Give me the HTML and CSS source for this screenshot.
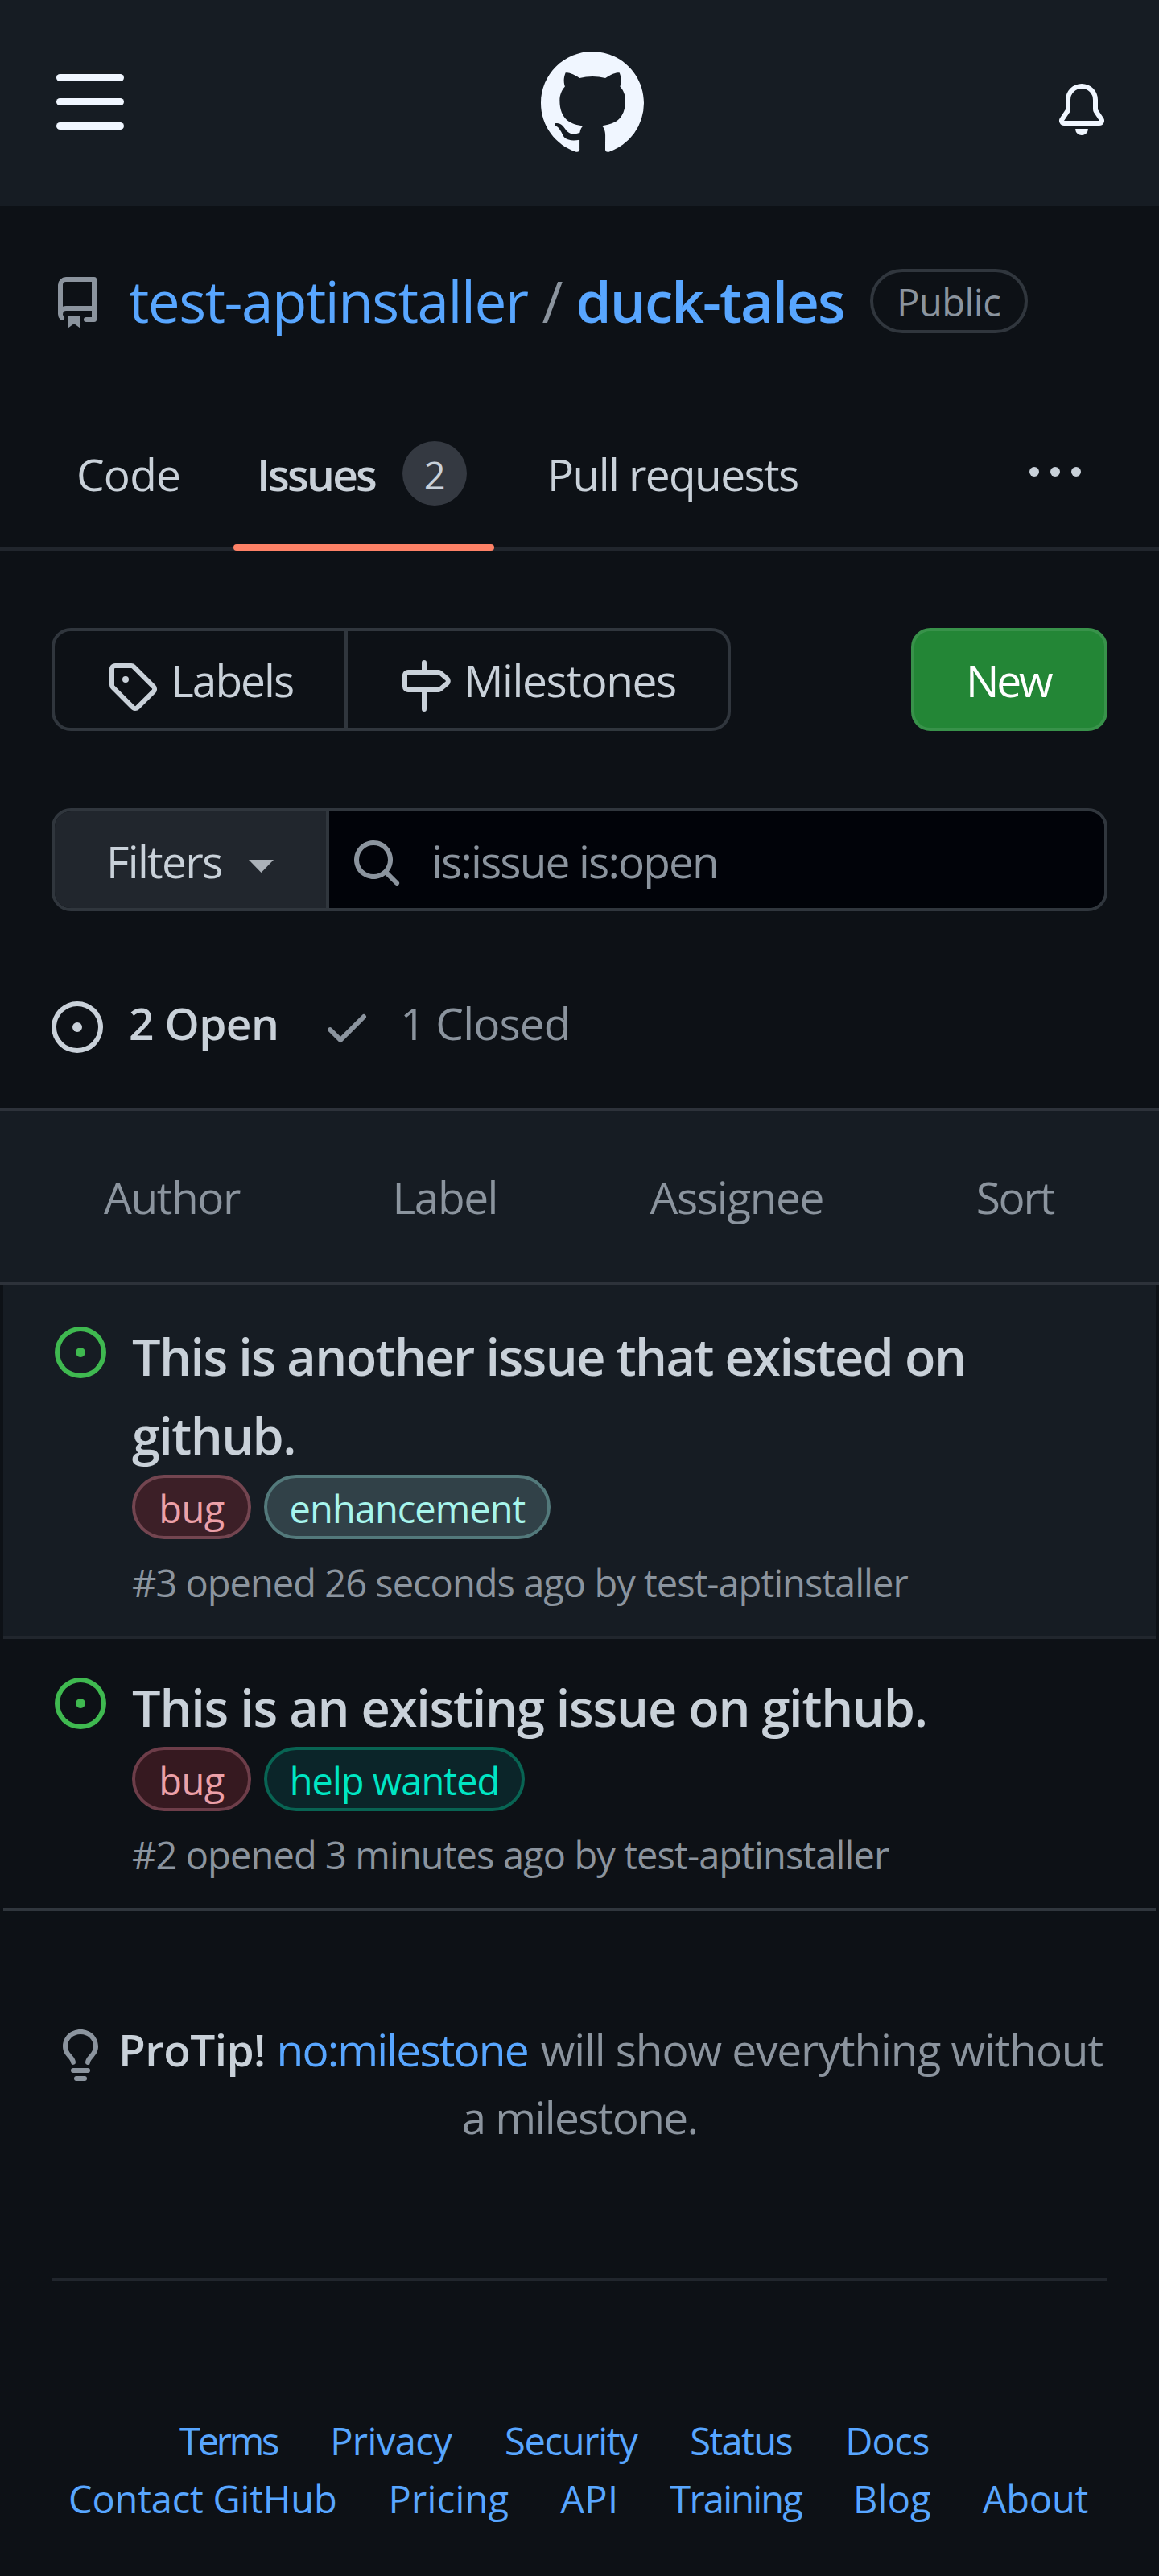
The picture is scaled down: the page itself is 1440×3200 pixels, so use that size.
FILE: index.html
```
<!DOCTYPE html>
<html lang="en">
<head>
<meta charset="utf-8">
<title>Issues · test-aptinstaller/duck-tales</title>
<link rel="stylesheet" href="styles.css">
</head>
<body>
<header class="header">
  <svg class="menu" viewBox="0 0 84 69"><rect width="84" height="9" rx="4.5"/><rect y="30" width="84" height="9" rx="4.5"/><rect y="60" width="84" height="9" rx="4.5"/></svg>
  <svg class="logo" viewBox="0 0 16 16"><path fill-rule="evenodd" d="M8 0C3.58 0 0 3.58 0 8c0 3.54 2.29 6.53 5.47 7.59.4.07.55-.17.55-.38 0-.19-.01-.82-.01-1.49-2.01.37-2.53-.49-2.69-.94-.09-.23-.48-.94-.82-1.13-.28-.15-.68-.52-.01-.53.63-.01 1.08.58 1.23.82.72 1.21 1.87.87 2.33.66.07-.52.28-.87.51-1.07-1.78-.2-3.64-.89-3.64-3.95 0-.87.31-1.59.82-2.15-.08-.2-.36-1.02.08-2.12 0 0 .67-.21 2.2.82.64-.18 1.32-.27 2-.27s1.36.09 2 .27c1.53-1.04 2.2-.82 2.2-.82.44 1.1.16 1.92.08 2.12.51.56.82 1.27.82 2.15 0 3.07-1.87 3.75-3.65 3.95.29.25.54.73.54 1.48 0 1.07-.01 1.93-.01 2.2 0 .21.15.46.55.38A8.01 8.01 0 0016 8c0-4.42-3.58-8-8-8z"/></svg>
  <svg class="icon bell" viewBox="0 0 16 16"><path d="M8 16a2 2 0 001.985-1.75c.017-.137-.097-.25-.235-.25h-3.5c-.138 0-.252.113-.235.25A2 2 0 008 16z"/><path fill-rule="evenodd" d="M8 1.5A3.5 3.5 0 004.5 5v2.947c0 .346-.102.683-.294.97l-1.703 2.556a.018.018 0 00-.003.01l.001.006c0 .002.002.004.004.006a.017.017 0 00.006.004l.007.001h10.964l.007-.001a.016.016 0 00.006-.004.016.016 0 00.004-.006l.001-.007a.017.017 0 00-.003-.01l-1.703-2.554a1.75 1.75 0 01-.294-.97V5A3.5 3.5 0 008 1.5zM3 5a5 5 0 0110 0v2.947c0 .05.015.098.042.139l1.703 2.555A1.518 1.518 0 0113.482 13H2.518a1.518 1.518 0 01-1.263-2.36l1.703-2.554A.25.25 0 003 7.947V5z"/></svg>
</header>

<div class="repo">
  <svg class="icon repo-icon" viewBox="0 0 16 16"><path fill-rule="evenodd" d="M2 2.5A2.5 2.5 0 014.5 0h8.75a.75.75 0 01.75.75v12.5a.75.75 0 01-.75.75h-2.5a.75.75 0 110-1.5h1.75v-2h-8a1 1 0 00-.714 1.7.75.75 0 01-1.072 1.05A2.495 2.495 0 012 11.5v-9zm10.5-1V9h-8c-.356 0-.694.074-1 .208V2.5a1 1 0 011-1h8zM5 12.25v3.25a.25.25 0 00.4.2l1.45-1.087a.25.25 0 01.3 0L8.6 15.7a.25.25 0 00.4-.2v-3.25a.25.25 0 00-.25-.25h-3.5a.25.25 0 00-.25.25z"/></svg>
  <a class="owner">test-aptinstaller</a>
  <span class="slash">/</span>
  <a class="name">duck-tales</a>
  <span class="visibility">Public</span>
</div>

<nav class="tabs">
  <a class="tab-code">Code</a>
  <a class="tab-issues"><span class="tab-issues-text">Issues</span><span class="counter">2</span></a>
  <a class="tab-pulls">Pull requests</a>
  <svg class="dots" viewBox="0 0 64 12"><circle cx="6" cy="6" r="6"/><circle cx="32" cy="6" r="6"/><circle cx="58" cy="6" r="6"/></svg>
</nav>

<div class="actions">
  <div class="group">
    <a class="group-item labels-link">
      <svg class="icon" viewBox="0 0 16 16"><path fill-rule="evenodd" d="M2.5 7.775V2.75a.25.25 0 01.25-.25h5.025a.25.25 0 01.177.073l6.25 6.25a.25.25 0 010 .354l-5.025 5.025a.25.25 0 01-.354 0l-6.25-6.25a.25.25 0 01-.073-.177zm-1.5 0V2.75C1 1.784 1.784 1 2.75 1h5.025c.464 0 .91.184 1.238.513l6.25 6.25a1.75 1.75 0 010 2.474l-5.026 5.026a1.75 1.75 0 01-2.474 0l-6.25-6.25A1.75 1.75 0 011 7.775zM6 5a1 1 0 100 2 1 1 0 000-2z"/></svg>
      <span class="labels-text">Labels</span>
    </a>
    <a class="group-item">
      <svg class="icon" viewBox="0 0 16 16"><path fill-rule="evenodd" d="M7.75 0a.75.75 0 01.75.75V3h3.634c.414 0 .814.147 1.13.414l2.07 1.75a1.75 1.75 0 010 2.672l-2.07 1.75a1.75 1.75 0 01-1.13.414H8.5v5.25a.75.75 0 11-1.5 0V10H2.75A1.75 1.75 0 011 8.25v-3.5C1 3.784 1.784 3 2.75 3H7V.75A.75.75 0 017.75 0zm0 8.5h4.384a.25.25 0 00.161-.06l2.07-1.75a.25.25 0 000-.38l-2.07-1.75a.25.25 0 00-.161-.06H2.75a.25.25 0 00-.25.25v3.5c0 .138.112.25.25.25h5z"/></svg>
      <span class="milestones-text">Milestones</span>
    </a>
  </div>
  <a class="new">New</a>
</div>

<div class="search">
  <div class="filters"><span class="filters-text">Filters</span><svg class="caret" viewBox="0 0 31 16"><path d="M0 0h31L15.500 16z"/></svg></div>
  <div class="query">
    <svg class="icon" viewBox="0 0 16 16"><path fill-rule="evenodd" d="M11.5 7a4.499 4.499 0 11-8.998 0A4.499 4.499 0 0111.5 7zm-.82 4.74a6 6 0 111.06-1.06l3.04 3.04a.75.75 0 11-1.06 1.06l-3.04-3.04z"/></svg>
    <span class="query-text">is:issue is:open</span>
  </div>
</div>

<div class="states">
  <svg class="icon" viewBox="0 0 16 16"><path d="M8 9.500a1.500 1.500 0 100-3 1.500 1.500 0 000 3z"/><path fill-rule="evenodd" d="M8 0a8 8 0 100 16A8 8 0 008 0zM1.500 8a6.500 6.500 0 1113 0 6.500 6.500 0 01-13 0z"/></svg>
  <span class="open">2 Open</span>
  <svg class="icon check" viewBox="0 0 16 16"><path d="M13.780 4.220a.75.75 0 010 1.060l-7.250 7.250a.75.75 0 01-1.060 0L2.220 9.280a.75.75 0 011.060-1.060L6 10.940l6.720-6.720a.75.75 0 011.060 0z"/></svg>
  <span class="closed">1 Closed</span>
</div>

<div class="sortbar">
  <span class="by-author">Author</span><span class="by-label">Label</span><span class="by-assignee">Assignee</span><span class="by-sort">Sort</span>
</div>

<main>
  <article class="issue issue-active">
    <svg class="icon" viewBox="0 0 16 16"><path d="M8 9.500a1.500 1.500 0 100-3 1.500 1.500 0 000 3z"/><path fill-rule="evenodd" d="M8 0a8 8 0 100 16A8 8 0 008 0zM1.500 8a6.500 6.500 0 1113 0 6.500 6.500 0 01-13 0z"/></svg>
    <div class="issue-body">
      <h2 class="title title-wrap">This is another issue that existed on<br>github.</h2>
      <div class="labels"><span class="label bug">bug</span><span class="label enhancement">enhancement</span></div>
      <p class="meta">#3 opened 26 seconds ago by test-aptinstaller</p>
    </div>
  </article>
  <article class="issue issue-last">
    <svg class="icon" viewBox="0 0 16 16"><path d="M8 9.500a1.500 1.500 0 100-3 1.500 1.500 0 000 3z"/><path fill-rule="evenodd" d="M8 0a8 8 0 100 16A8 8 0 008 0zM1.500 8a6.500 6.500 0 1113 0 6.500 6.500 0 01-13 0z"/></svg>
    <div class="issue-body">
      <h2 class="title">This is an existing issue on github.</h2>
      <div class="labels"><span class="label bug">bug</span><span class="label help">help wanted</span></div>
      <p class="meta meta-last">#2 opened 3 minutes ago by test-aptinstaller</p>
    </div>
  </article>
</main>

<div class="protip">
  <div class="protip-line">
    <svg class="icon bulb" viewBox="0 0 16 16"><path fill-rule="evenodd" d="M8 1.5c-2.363 0-4 1.69-4 3.75 0 .984.424 1.625.984 2.304l.214.253c.223.264.47.556.673.848.284.411.537.896.621 1.49a.75.75 0 01-1.484.211c-.04-.282-.163-.547-.37-.847a8.695 8.695 0 00-.542-.68c-.084-.1-.173-.205-.268-.32C3.201 7.75 2.5 6.766 2.5 5.25 2.5 2.31 4.863 0 8 0s5.5 2.31 5.5 5.25c0 1.516-.701 2.5-1.328 3.259-.095.115-.184.22-.268.319-.207.245-.383.453-.541.681-.208.3-.33.565-.37.847a.75.75 0 01-1.485-.212c.084-.593.337-1.078.621-1.489.203-.292.45-.584.673-.848.075-.088.147-.173.213-.253.561-.679.985-1.32.985-2.304 0-2.06-1.637-3.75-4-3.75zM6 15.25a.75.75 0 01.75-.75h2.5a.75.75 0 010 1.5h-2.5a.75.75 0 01-.75-.75zM5.75 12a.75.75 0 000 1.5h4.5a.75.75 0 000-1.5h-4.5z"/></svg>
    <strong class="protip-head">ProTip!</strong>
    <a class="protip-link">no:milestone</a>
    <span class="protip-text">will show everything without</span>
  </div>
  <div class="protip-end">a milestone.</div>
</div>

<footer class="footer">
  <div class="links links-first"><a class="terms">Terms</a><a class="privacy">Privacy</a><a class="security">Security</a><a class="status">Status</a><a class="docs">Docs</a></div>
  <div class="links links-second"><a class="contact">Contact GitHub</a><a class="pricing">Pricing</a><a class="api">API</a><a class="training">Training</a><a class="blog">Blog</a><a class="about">About</a></div>
</footer>
</body>
</html>
```
FILE: styles.css
```
*{box-sizing:border-box}
body{margin:0;width:1440px;height:3200px;overflow:hidden;background:#0d1116;color:#c9d1d9;font:400 55px/84px "Open Sans","Noto Sans",sans-serif;white-space:nowrap}
svg{display:block;flex:none;fill:currentColor}
.icon{width:64px;height:64px}

.header{display:flex;align-items:center;height:256px;padding:0 64px 0 70px;background:#161c23;color:#f0f6ff}
.menu{width:84px;height:69px;margin-top:-3px}
.logo{width:128px;height:128px;margin-left:518px}
.bell{margin:16px 0 0 auto}

.repo{display:flex;align-items:center;height:96px;margin-top:70px;padding-left:64px;font-size:71px;line-height:96px}
.repo-icon{margin:4px 32px 0 0;color:#8b949e}
.owner{color:#58a6ff;letter-spacing:-1.45px}
.slash{margin:0 16px 0 18px;color:#8b949e}
.name{color:#58a6ff;font-weight:600;letter-spacing:-1.95px}
.visibility{display:flex;justify-content:center;align-items:center;width:196px;height:80px;margin-left:32px;padding-top:2px;border:4px solid #30363d;border-radius:40px;color:#8b949e;font-size:47px;letter-spacing:-.52px}

.tabs{display:flex;align-items:center;height:188px;margin-top:74px;padding:0 97px 0 95px;border-bottom:4px solid #21262d}
.tab-code{padding-top:2px;letter-spacing:-.79px}
.tab-issues{position:relative;display:flex;align-items:center;height:184px;margin-left:66px;padding:0 34px 0 29px}
.tab-issues::after{content:"";position:absolute;left:0;right:0;bottom:-4px;height:8px;border-radius:4px;background:#fd8166}
.tab-issues-text{padding-top:2px;font-weight:600;letter-spacing:-2.8px}
.counter{width:80px;height:80px;margin-left:34px;padding-top:2px;border-radius:50%;background:#343941;font-size:47px;line-height:80px;text-align:center}
.tab-pulls{margin-left:66px;padding-top:2px;letter-spacing:-1.61px}
.dots{width:64px;height:12px;margin:-4px 0 0 auto}

.actions{display:flex;justify-content:space-between;height:128px;margin:96px 64px 0}
.group{display:flex;width:844px;border:4px solid #30363d;border-radius:24px}
.group-item{display:flex;align-items:center;gap:16px;padding:2px 0 0 64px}
.group-item .icon{margin-top:14px}
.labels-link{width:364px;border-right:4px solid #30363d}
.labels-text{letter-spacing:-1.94px}
.milestones-text{letter-spacing:-1.4px}
.new{width:244px;padding:19px 0 0 64px;border:4px solid #38924a;border-radius:24px;background:#238636;color:#fff;letter-spacing:-3.15px}

.search{display:flex;height:128px;margin:96px 64px 0;border:4px solid #30363d;border-radius:24px;overflow:hidden}
.filters{display:flex;align-items:center;width:341px;padding:3px 0 0 64px;border-right:4px solid #30363d;background:#21262d}
.filters-text{letter-spacing:-1.69px}
.caret{width:31px;height:16px;margin:12px 0 0 33px;color:#abb1b8}
.query{display:flex;flex:1;align-items:center;gap:36px;padding:3px 0 0 27px;background:#010309;color:#8b949e}
.query .icon{margin-top:5px}
.query-text{letter-spacing:-1.86px}

.states{display:flex;align-items:center;height:84px;margin-top:96px;padding-left:64px}
.states .icon{margin-top:12px}
.open{margin-left:32px;padding-top:2px;font-weight:600;letter-spacing:-.6px}
.states .check{margin-left:53px;color:#8b949e}
.closed{margin-left:34px;padding-top:2px;color:#8b949e;letter-spacing:-.85px}

.sortbar{display:flex;justify-content:space-between;align-items:center;height:220px;margin-top:64px;padding:2px 131px 0 129px;border:solid #2d323a;border-width:4px 0;background:#161c23;color:#8b949e}
.by-author{letter-spacing:-1.39px}
.by-label{letter-spacing:-1.45px}
.by-assignee{letter-spacing:-1.37px}
.by-sort{letter-spacing:-2.24px}

.issue{display:flex;gap:32px;margin:0 4px;padding:35px 0 30px 64px;border-bottom:4px solid #21262d}
.issue-active{padding-top:39px;background:#161c23}
.issue-last{border-color:#30363d}
.issue .icon{margin-top:13px;color:#3fb950}
.title{margin:0;padding-top:1px;font-size:63px;font-weight:600;line-height:98px;letter-spacing:-1.2px}
.title-wrap{letter-spacing:-1.57px}
.labels{display:flex;gap:16px;height:80px}
.label{height:80px;padding-top:2px;border:4px solid;border-radius:40px;font-size:47px;line-height:72px;text-align:center}
.bug{width:148px;border-color:#6d3d49;background:#361920;color:#eca0a8;letter-spacing:-.6px}
.issue-active .bug{border-color:#734550;background:#3c1f27}
.enhancement{width:356px;border-color:#53797b;background:#314148;color:#a7f5ec;letter-spacing:-.96px}
.help{width:324px;border-color:#086453;background:#0b2529;color:#00e6c4;letter-spacing:-.96px}
.meta{margin:18px 0 0;color:#8b949e;font-size:47px;line-height:72px;letter-spacing:-.98px}
.meta-last{letter-spacing:-.9px}

.protip{margin-top:130px;color:#8b949e}
.protip-line{display:flex;align-items:center;height:84px;padding-left:68px}
.bulb{margin:13px 15px 0 0}
.protip-head{color:#c9d1d9;font-weight:600;letter-spacing:-.63px}
.protip-link{margin-left:14px;color:#58a6ff;letter-spacing:-1.85px}
.protip-text{margin-left:16px;letter-spacing:-1.1px}
.protip-end{text-align:center;letter-spacing:-1.63px}

.footer{margin:158px 64px 0;padding-top:162px;border-top:4px solid #21262d;color:#58a6ff;font-size:47px;line-height:72px}
.links{display:flex}
.links-first{gap:66px;padding-left:159px}
.links-second{gap:64px;padding-left:21px}
.terms{letter-spacing:-3.25px}
.privacy{letter-spacing:-.58px}
.security{letter-spacing:-1.33px}
.status{letter-spacing:-1.64px}
.docs{letter-spacing:-.63px}
.contact{letter-spacing:-.18px}
.pricing{letter-spacing:.24px}
.api{letter-spacing:.3px}
.training{letter-spacing:-1.8px}
.blog{letter-spacing:.17px}
.about{letter-spacing:-.2px}
```
